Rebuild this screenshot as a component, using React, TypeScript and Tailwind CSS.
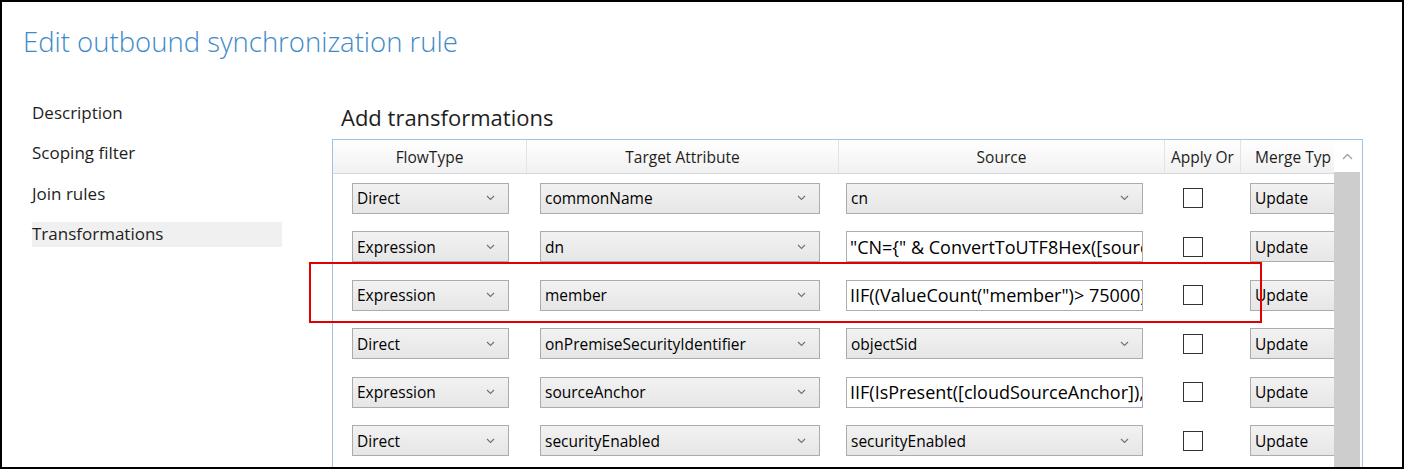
import React from "react";

const font = { fontFamily: '"Open Sans", "Noto Sans", sans-serif' };

function Chevron() {
  return (
    <svg width="9" height="6" viewBox="0 0 9 6" className="shrink-0">
      <path d="M1 1 L4.5 4.5 L8 1" fill="none" stroke="#707070" strokeWidth="1.1" />
    </svg>
  );
}

function Combo({ text, w, chevron = true }: { text: string; w: number; chevron?: boolean }) {
  return (
    <div
      className="h-[31px] border border-[#acacac] bg-gradient-to-b from-[#f2f2f2] to-[#e6e6e6] flex items-center pl-[4px] pr-[13px] shrink-0 overflow-hidden"
      style={{ width: w }}
    >
      <span className="flex-1 text-[15.5px] text-black whitespace-nowrap leading-[22px]">{text}</span>
      {chevron && <Chevron />}
    </div>
  );
}

function TextBox({ text, w }: { text: string; w: number }) {
  return (
    <div
      className="h-[31px] border border-[#abadb3] bg-white flex items-center pl-[3px] shrink-0 overflow-hidden"
      style={{ width: w }}
    >
      <span className="text-[18px] text-black whitespace-nowrap leading-[24px]">{text}</span>
    </div>
  );
}

type Row = { flow: string; target: string; source: string; expr: boolean };

const rows: Row[] = [
  { flow: "Direct", target: "commonName", source: "cn", expr: false },
  { flow: "Expression", target: "dn", source: '"CN={" & ConvertToUTF8Hex([sourceAnchor]) & "}"', expr: true },
  { flow: "Expression", target: "member", source: 'IIF((ValueCount("member")> 75000),Error("Member count exceeds"),[member])', expr: true },
  { flow: "Direct", target: "onPremiseSecurityIdentifier", source: "objectSid", expr: false },
  { flow: "Expression", target: "sourceAnchor", source: "IIF(IsPresent([cloudSourceAnchor]),[cloudSourceAnchor],[sourceAnchor])", expr: true },
  { flow: "Direct", target: "securityEnabled", source: "securityEnabled", expr: false },
];

export default function App() {
  return (
    <div className="w-[1404px] h-[469px] bg-white border-2 border-black overflow-hidden relative" style={font}>
      <div className="pl-[21px] pt-[22px] h-[78px]">
        <h1 className="text-[27.5px] font-light text-[#3d89c9] leading-[36px] whitespace-nowrap">Edit outbound synchronization rule</h1>
      </div>
      <div className="flex">
        <nav className="w-[310px] pl-[30px] pt-[20px] flex flex-col shrink-0">
          {["Description", "Scoping filter", "Join rules", "Transformations"].map((t, i) => (
            <div
              key={t}
              className={
                "w-[250px] h-[25px] mb-[15.5px] flex items-center text-[17px] text-[#1e1e1e] whitespace-nowrap " +
                (i === 3 ? "bg-[#f0f0f0]" : "")
              }
            >
              {t}
            </div>
          ))}
        </nav>
        <div className="flex flex-col pl-[20px]">
          <div className="pl-[9px] pt-[22px] h-[59px] text-[22px] text-[#1e1e1e] leading-[30px] whitespace-nowrap">Add transformations</div>
          <div className="w-[1031px] border border-[#9fc3e3] bg-white flex">
            <div className="flex flex-col w-[1001px] shrink-0">
              <div className="flex h-[34px] bg-gradient-to-b from-white to-[#f1f1f1] border-b border-[#d5d9de] text-[15.5px] text-[#1e1e1e] whitespace-nowrap">
                <div className="w-[194px] flex items-center justify-center border-r border-[#e3e3e3] pt-[2px]">FlowType</div>
                <div className="w-[312px] flex items-center justify-center border-r border-[#e3e3e3] pt-[2px]">Target Attribute</div>
                <div className="w-[326px] flex items-center justify-center border-r border-[#e3e3e3] pt-[2px]">Source</div>
                <div className="w-[76px] flex items-center justify-center border-r border-[#e3e3e3] pt-[2px]">Apply Or</div>
                <div className="w-[93px] flex items-center pl-[14px] overflow-hidden pt-[2px]">Merge Typ</div>
              </div>
              {rows.map((r, i) => (
                <div key={i} className="flex h-[48.5px] items-center">
                  <div className="w-[194px] pl-[19px] flex">
                    <Combo text={r.flow} w={157} />
                  </div>
                  <div className="w-[312px] pl-[13px] flex">
                    <Combo text={r.target} w={280} />
                  </div>
                  <div className="w-[326px] pl-[7px] flex">
                    {r.expr ? <TextBox text={r.source} w={297} /> : <Combo text={r.source} w={297} />}
                  </div>
                  <div className="w-[76px] pl-[18px] flex">
                    <div className="w-[20px] h-[20px] border border-[#333] bg-white" />
                  </div>
                  <div className="w-[93px] pl-[9px] flex overflow-hidden">
                    <Combo text="Update" w={110} chevron={false} />
                  </div>
                </div>
              ))}
            </div>
            <div className="w-[26px] flex flex-col shrink-0">
              <div className="h-[32px] bg-white flex items-center justify-center">
                <svg width="11" height="7" viewBox="0 0 11 7">
                  <path d="M1 6 L5.5 1.5 L10 6" fill="none" stroke="#a0a0a0" strokeWidth="1.3" />
                </svg>
              </div>
              <div className="flex-1 bg-[#cdcdcd] min-h-[300px]" />
            </div>
          </div>
        </div>
      </div>
      <div className="absolute left-[307px] top-[260px] w-[953px] h-[61px] border-2 border-[#e00000]" />
    </div>
  );
}
